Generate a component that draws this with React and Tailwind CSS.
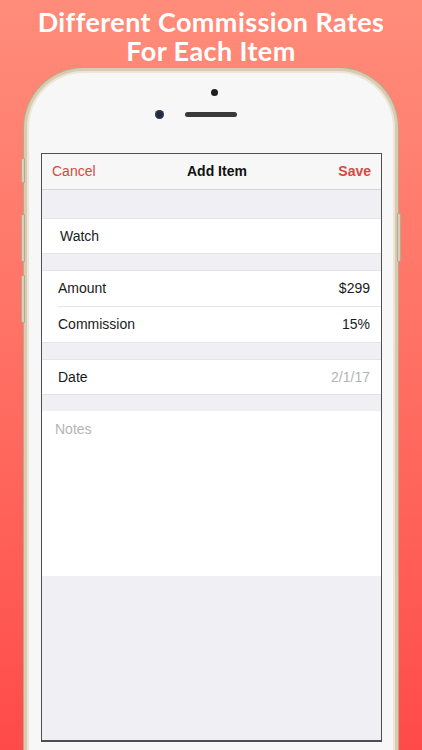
export default function App() {
  const sans = { fontFamily: '"Liberation Sans", Arial, sans-serif' };
  return (
    <div className="relative h-[750px] w-[422px] overflow-hidden bg-gradient-to-b from-[#ff8c7a] to-[#ff4a4a]">
      <div
        className="pt-[7px] text-center text-[27px] font-bold leading-[29px] tracking-[0.4px] text-white"
        style={{ fontFamily: 'Lato, "Open Sans", sans-serif' }}
      >
        <div>Different Commission Rates</div>
        <div>For Each Item</div>
      </div>

      <div className="relative ml-[24px] mt-[3px] w-[374px]">
        {/* side buttons */}
        <div className="absolute left-[-3px] top-[90px] h-[25px] w-[4px] rounded-l-[2px] border border-[#b8a98c] bg-[#d9cfbd]" />
        <div className="absolute left-[-3px] top-[146px] h-[48px] w-[4px] rounded-l-[2px] border border-[#b8a98c] bg-[#d9cfbd]" />
        <div className="absolute left-[-3px] top-[207px] h-[48px] w-[4px] rounded-l-[2px] border border-[#b8a98c] bg-[#d9cfbd]" />
        <div className="absolute right-[-3px] top-[145px] h-[49px] w-[4px] rounded-r-[2px] border border-[#b8a98c] bg-[#d9cfbd]" />

        <div className="rounded-t-[60px] border-x-[3px] border-t-[3px] border-[#d8cbb1] bg-[#f7f7f7] shadow-[0_0_0_1px_#b9a888,inset_0_0_0_2px_#ece6da]">
          {/* top area */}
          <div className="relative h-[82px]">
            <div className="absolute left-[184px] top-[18px] h-[7px] w-[7px] rounded-full bg-[#1e1e1e]" />
            <div className="absolute left-[128px] top-[39px] h-[9px] w-[9px] rounded-full bg-[#242a3d] shadow-[inset_0_0_2px_#55607f]" />
            <div className="absolute left-[158px] top-[41px] h-[5px] w-[52px] rounded-full bg-[#3a3a3a]" />
          </div>

          {/* screen */}
          <div className="ml-[14px] mr-[13px] flex h-[589px] flex-col border-x border-t border-[#4f4f4f] border-b-[2px] border-b-[#4f4f4f] bg-[#efeff4]" style={sans}>
            <div className="flex h-[36px] items-center justify-between border-b border-[#d7d7db] bg-[#f7f7f7] px-[10px] text-[14px]">
              <span className="text-[#d5493f]">Cancel</span>
              <span className="font-bold text-[#111]">Add Item</span>
              <span className="font-bold text-[#d5493f]">Save</span>
            </div>
            <div className="h-[28px]" />
            <div className="flex h-[36px] items-center border-y border-[#e4e4e8] bg-white pl-[18px] text-[14px] text-[#1a1a1a]">
              Watch
            </div>
            <div className="h-[16px]" />
            <div className="border-y border-[#e4e4e8] bg-white text-[14px] text-[#1a1a1a]">
              <div className="ml-[16px] flex h-[36px] items-center justify-between border-b border-[#e6e6ea] pr-[11px]">
                <span>Amount</span>
                <span>$299</span>
              </div>
              <div className="flex h-[35px] items-center justify-between pl-[16px] pr-[11px]">
                <span>Commission</span>
                <span>15%</span>
              </div>
            </div>
            <div className="h-[16px]" />
            <div className="flex h-[36px] items-center justify-between border-y border-[#e4e4e8] bg-white pl-[16px] pr-[11px] text-[14px] text-[#1a1a1a]">
              <span>Date</span>
              <span className="text-[#b3b3b3]">2/1/17</span>
            </div>
            <div className="h-[16px]" />
            <div className="h-[165px] bg-white px-[13px] pt-[8px] text-[14px] text-[#b5b5b5]">Notes</div>
            <div className="flex-1" />
          </div>
          <div className="h-[20px]" />
        </div>
      </div>
    </div>
  );
}
